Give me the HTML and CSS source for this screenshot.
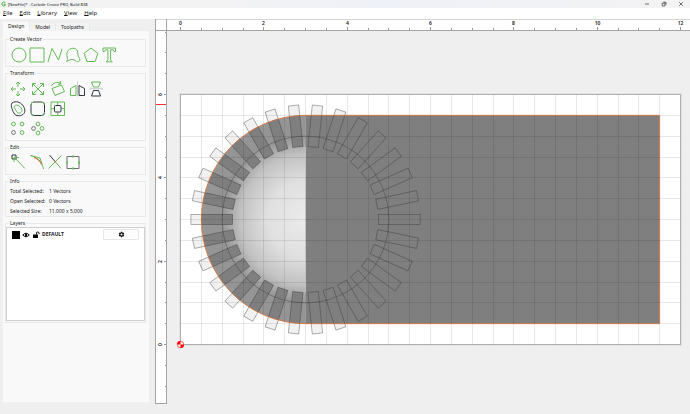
FILE: index.html
```html
<!DOCTYPE html>
<html lang="en">
<head>
<meta charset="utf-8">
<title>[NewFile]* - Carbide Create PRO, Build 838</title>
<link rel="stylesheet" href="styles.css">
</head>
<body>
<header class="titlebar">
  <svg class="app-logo" viewBox="0 0 8 8" aria-hidden="true"><path d="M5.200 2.500A2 2 0 1 0 5.200 5.500V4.300H3.800" fill="none" stroke="#3cb03c" stroke-width="1"/></svg>
  <span class="title">[NewFile]* - Carbide Create PRO, Build 838</span>
  <div class="window-buttons">
    <button aria-label="Minimize"><svg viewBox="0 0 6 6"><path d="M1 3H5"/></svg></button>
    <button aria-label="Restore"><svg viewBox="0 0 6 6"><path d="M1.2 2.2H4V5H1.2ZM2.2 1.2H5V4"/></svg></button>
    <button aria-label="Close"><svg viewBox="0 0 6 6"><path d="M1.2 1.2L4.8 4.8M4.8 1.2L1.2 4.8"/></svg></button>
  </div>
</header>
<nav class="menubar">
  <button><u>F</u>ile</button><button><u>E</u>dit</button><button><u>L</u>ibrary</button><button><u>V</u>iew</button><button><u>H</u>elp</button>
</nav>
<main class="workspace">
  <aside class="sidebar">
    <div class="tabs" role="tablist">
      <button class="tab active" role="tab" aria-selected="true">Design</button>
      <button class="tab" role="tab">Model</button>
      <button class="tab" role="tab">Toolpaths</button>
    </div>
    <div class="panel">
      <fieldset class="group create">
        <legend>Create Vector</legend>
        <div class="tools">
          <button aria-label="Circle"><svg viewBox="0 0 18 18"><circle cx="9" cy="9" r="7"/></svg></button>
          <button aria-label="Rectangle"><svg viewBox="0 0 18 18"><path d="M2 2H16V16H2Z"/></svg></button>
          <button aria-label="Polyline"><svg viewBox="0 0 18 18"><path d="M2 16L6 2.500L12.500 14L16 3"/></svg></button>
          <button aria-label="Curve"><svg viewBox="0 0 18 18"><path d="M2.500 15.500C5 13 1.500 9.500 3.500 5.500C5.500 1.500 12 1 13.500 5C14.500 8 13 9 15.500 12.500C16.500 15 15 16 12.500 15.500C9 12.500 7 13 2.500 15.500Z"/></svg></button>
          <button aria-label="Polygon"><svg viewBox="0 0 18 18"><path d="M9 2L15.800 7.200L13.200 15.500H4.800L2.200 7.200Z"/></svg></button>
          <button aria-label="Text"><svg viewBox="0 0 18 18"><path d="M3 2H15.500V5.500H14L13 3.800H10.600V14.200L12.300 15.800H6.200L7.900 14.200V3.800H5.500L4.500 5.500H3Z"/></svg></button>
        </div>
      </fieldset>
      <fieldset class="group transform">
        <legend>Transform</legend>
        <div class="tools wide">
          <button aria-label="Move"><svg viewBox="0 0 20 20"><path d="M10 3V8M10 12V17M3 10H8M12 10H17M8 5L10 3L12 5M8 15L10 17L12 15M5 8L3 10L5 12M15 8L17 10L15 12"/></svg></button>
          <button aria-label="Scale"><svg viewBox="0 0 20 20"><path d="M4.500 8V4.500H8M12 4.500H15.500V8M15.500 12V15.500H12M8 15.500H4.500V12M4.500 4.500L15.500 15.500M15.500 4.500L4.500 15.500"/></svg></button>
          <button aria-label="Rotate"><svg viewBox="0 0 20 20"><path d="M4 9.500L13.500 6L16.500 12.500L7 16.500ZM3.500 7C5 3.500 9 2.500 12.500 4.500M10 5.500L13 4.800L12 2"/></svg></button>
          <button aria-label="Mirror horizontally"><svg viewBox="0 0 20 20"><path d="M2.500 16.500V9.500L8 6.500V16.500Z"/><path class="dark" d="M11 6.500L16.500 9.500V16.500H11Z"/><path class="soft" d="M9.500 2.500V17.500"/></svg></button>
          <button aria-label="Mirror vertically"><svg viewBox="0 0 20 20"><path d="M3.500 3H12.500L10.500 8H5.500Z"/><path class="dark" d="M5.500 11.500H10.500L12.500 17H3.500Z"/><path class="soft" d="M1.500 9.700H15"/></svg></button>
        </div>
        <div class="tools wide">
          <button aria-label="Offset"><svg viewBox="0 0 20 20"><path class="dark" d="M4 4C8 1.500 12 3 14.500 6C17 9 18 13 15 15.500C12 17.500 8 17 6.500 15C5 12.500 2 7 4 4Z"/><path d="M6.500 7C9 4.500 14 8 14 11.500C13.500 14.500 9.500 15 8.500 12.500C8 10.500 5.500 9 6.500 7Z"/></svg></button>
          <button aria-label="Fillet"><svg viewBox="0 0 20 20"><rect class="dark" x="3" y="3" width="13.500" height="13.500" rx="3"/><path d="M3 6Q3 3 6 3M13.500 3Q16.500 3 16.500 6M16.500 13.500Q16.500 16.500 13.500 16.500M6 16.500Q3 16.500 3 13.500"/></svg></button>
          <button aria-label="Align"><svg viewBox="0 0 20 20"><path d="M3 3H16.500V16.500H3ZM9.700 3V6M9.700 13.500V16.500M3 9.700H6M13.500 9.700H16.500"/><rect class="dark" x="6.500" y="6.500" width="6.500" height="6.500" rx="1"/></svg></button>
        </div>
        <div class="tools wide">
          <button aria-label="Linear array"><svg viewBox="0 0 20 20"><circle cx="5.500" cy="5" r="1.900"/><circle cx="14" cy="5" r="1.900"/><circle class="mid" cx="5.500" cy="13.500" r="1.900"/><circle cx="14" cy="13.500" r="1.900"/></svg></button>
          <button aria-label="Circular array"><svg viewBox="0 0 20 20"><circle cx="10" cy="5" r="1.900"/><circle class="mid" cx="5.500" cy="9.500" r="1.900"/><circle cx="14" cy="9.500" r="1.900"/><circle cx="10" cy="14" r="1.900"/></svg></button>
        </div>
      </fieldset>
      <fieldset class="group">
        <legend>Edit</legend>
        <div class="tools">
          <button aria-label="Node edit"><svg viewBox="0 0 18 18"><path class="dark" d="M2 2H6V6H2Z"/><path d="M4.500 4.500L15 15.500M4 9V4.500H9"/></svg></button>
          <button aria-label="Trim curve"><svg viewBox="0 0 18 18"><path d="M2.500 2.500C9 4.500 14 8 15.500 16M2.500 2.500L12 5L14 11"/><path class="red" d="M6 4.500C10 6 12 8 13.500 11.500"/></svg></button>
          <button aria-label="Trim vectors"><svg viewBox="0 0 18 18"><path class="dark" d="M3.500 2L9 8.500"/><path d="M15.500 2.500L2.500 15.500M10 9.500L15 15.500"/><path class="red" d="M8.500 8L10 9.800"/></svg></button>
          <button aria-label="Join vectors"><svg viewBox="0 0 18 18"><path class="mid" d="M3 3.500H15V15.500H3Z"/><path class="node" d="M9 2.500V4.500M9 14.500V16.500M2 9.500H4M14 9.500H16"/></svg></button>
        </div>
      </fieldset>
      <fieldset class="group info-group">
        <legend>Info</legend>
        <dl class="info">
          <dt>Total Selected:</dt><dd>1 Vectors</dd>
          <dt>Open Selected:</dt><dd>0 Vectors</dd>
          <dt>Selected Size:</dt><dd>11.000 x 5.000</dd>
        </dl>
      </fieldset>
      <fieldset class="group layers">
        <legend>Layers</legend>
        <div class="layer-list">
          <div class="layer">
            <span class="swatch"></span>
            <button class="layer-icon" aria-label="Visibility"><svg viewBox="0 0 8 8"><path d="M.8 4Q4 .4 7.200 4Q4 7.600 .8 4Z" fill="none" stroke="#000"/><circle cx="4" cy="4" r="1.200"/></svg></button>
            <button class="layer-icon" aria-label="Lock"><svg viewBox="0 0 8 8"><path d="M1 3.500H6V7H1Z"/><path d="M4.500 3.500V2.200A1.200 1.200 0 0 1 7 2.200V3.200" fill="none" stroke="#000"/></svg></button>
            <span class="layer-name">DEFAULT</span>
            <button class="layer-settings" aria-label="Layer settings"><svg viewBox="0 0 8 8"><circle cx="4" cy="4" r="1.900" fill="none" stroke="#000" stroke-width="1.300"/><path d="M4 .8V2M4 6V7.200M1.200 2.400L2.300 3M5.700 5L6.800 5.600M1.200 5.600L2.300 5M5.700 3L6.800 2.400" stroke="#000" stroke-width="1.300"/></svg></button>
          </div>
        </div>
      </fieldset>
    </div>
  </aside>
  <section class="viewport">
    <div class="corner"></div>
    <svg class="ruler ruler-x" id="ruler-x"></svg>
    <svg class="ruler ruler-y" id="ruler-y"></svg>
    <svg class="canvas" id="canvas" role="img" aria-label="Design canvas"></svg>
  </section>
</main>
<script src="app.js"></script>
</body>
</html>
```
FILE: styles.css
```css
* { box-sizing: border-box; }
html, body { height: 100%; }
body {
  margin: 0;
  display: flex;
  flex-direction: column;
  background: #efefef;
  color: #1c1c1c;
  font: 5px/7px "Noto Sans", "Open Sans", sans-serif;
  overflow: hidden;
}
button {
  margin: 0;
  padding: 0;
  border: 0;
  background: none;
  color: inherit;
  font: inherit;
}
svg { display: block; }

.titlebar {
  display: flex;
  align-items: center;
  height: 8px;
  flex: none;
  background: linear-gradient(90deg, #f3f3f3 30%, #eff1f8 55%, #f3f3f3);
  font-size: 4px;
}
.app-logo { width: 8px; height: 8px; }
.window-buttons { display: flex; gap: 11px; margin-left: auto; padding-right: 6px; }
.window-buttons svg { width: 6px; height: 6px; fill: none; stroke: #333; stroke-width: .7; }

.menubar {
  display: flex;
  align-items: center;
  gap: 7px;
  height: 11px;
  flex: none;
  padding-left: 3px;
  background: #fff;
  font-size: 6px;
}
.menubar u { text-decoration-thickness: 1px; text-underline-offset: 0; }

.workspace { flex: 1; display: flex; min-height: 0; }
.sidebar {
  width: 155px;
  flex: none;
  display: flex;
  flex-direction: column;
  padding: 3px 6px 12px 3px;
}
.tabs { display: flex; align-items: flex-end; }
.tab {
  height: 8px;
  padding: 0 5px;
  background: #f3f3f3;
  border-right: 1px solid #e8e8e8;
}
.tab.active { height: 9px; background: #f9f9f9; }
.panel {
  flex: 1;
  display: flex;
  flex-direction: column;
  gap: 3px;
  padding: 5px 3px 0 2px;
  background: #f9f9f9;
}
.group {
  min-width: 0;
  margin: 0;
  padding: 2px 4px 3px;
  border: 1px solid #e8e8e8;
}
.group legend { margin-left: -1px; padding: 0 1px; }
.create { padding-top: 3px; padding-bottom: 2px; }
.transform { padding-bottom: 1px; }
.tools { display: flex; }
.tools button, .tools svg { width: 18px; height: 18px; }
.tools.wide { margin-left: -2px; }
.tools.wide button, .tools.wide svg { width: 20px; height: 20px; }
.tools svg { fill: none; stroke: #62bb55; stroke-width: 1; }
.tools .dark { stroke: #303842; }
.tools .mid { stroke: #707070; }
.tools .soft { stroke: #b4b4b4; stroke-width: .7; }
.tools .red { stroke: #f0563c; }
.tools .node { stroke-width: 2; }

.info-group { padding-top: 1px; padding-bottom: 0; }
.info {
  display: grid;
  grid-template-columns: 39px 1fr;
  margin: 0;
  line-height: 10px;
}
.info dd { margin: 0; }

.layers { padding: 0 0 1px; }
.layers legend { margin-left: 3px; }
.layer-list {
  height: 94px;
  padding: 1px 5px;
  background: #fff;
  border: 1px solid #d0d0d0;
}
.layer { display: flex; align-items: center; gap: 2px; }
.swatch { width: 8px; height: 8px; background: #000; }
.layer-icon svg { width: 8px; height: 8px; }
.layer-name { font-weight: 700; }
.layer-settings {
  display: grid;
  place-items: center;
  width: 36px;
  height: 11px;
  margin-left: auto;
  border: 1px solid #e6e6e6;
  border-radius: 1px;
  background: #fdfdfd;
}
.layer-settings svg { width: 7px; height: 7px; }

.viewport {
  flex: 1;
  min-width: 0;
  display: grid;
  grid-template-columns: 12px 1fr;
  grid-template-rows: 12px 1fr;
  padding-bottom: 10px;
}
.corner, .ruler {
  background: #fff;
  border: 0 solid #a4a4a4;
}
.corner { border-width: 0 1px 1px 1px; }
.ruler { width: 100%; height: 100%; overflow: hidden; }
.ruler-x { border-width: 0 0 1px; }
.ruler-y { border-width: 0 1px 1px 1px; }
.corner, .ruler-x { box-shadow: inset 0 1px #d4d4d4; }
.ruler path { stroke: #999; fill: none; }
.ruler text { font: 600 5px "Noto Sans", sans-serif; text-anchor: middle; fill: #222; }
.ruler .cursor { stroke: #f33; stroke-width: 1; }
.canvas { width: 100%; height: 100%; overflow: hidden; }

.board { fill: #fff; stroke: #b0b0b0; }
.board-shadow { fill: none; stroke: #e2e2e2; stroke-width: 3; }
.solid { fill: #7f7f7f; }
.rim { fill: #959595; }
.pad { fill: #f1f1f1; }
.tooth { fill: #7f7f7f; }
.grid { stroke: #000; stroke-opacity: .09; fill: none; }
.wire { stroke: #333; stroke-opacity: .75; stroke-width: .5; fill: none; }
.selected { stroke: #e07030; stroke-width: .8; fill: none; }
.edge { stroke: #ddd; stroke-width: .8; }
.origin { fill: #f00; }
.origin-back { fill: #fff; stroke: #f00; stroke-width: .6; }
```
FILE: app.js
```js
const UNIT = 125 / 3;
const ORIGIN = { x: 13.5, y: 313.5 };
const px = u => ORIGIN.x + u * UNIT;
const py = u => ORIGIN.y - u * UNIT;

function rulerX() {
  let ticks = '', labels = '';
  for (let i = 0; i <= 24; i++) {
    const x = Math.round(px(i / 2) - .5) + .5;
    ticks += `M${x} ${i % 4 ? 9 : 8}V12`;
    if (i % 4 === 0) labels += `<text x="${x}" y="6">${i / 2}</text>`;
  }
  document.getElementById('ruler-x').innerHTML = `<path d="${ticks}"/>${labels}`;
}

function rulerY() {
  let ticks = '', labels = '';
  for (let i = -2; i <= 15; i++) {
    const y = Math.round(py(i / 2) - .5) + .5;
    ticks += `M${i % 4 ? 9 : 8} ${y}H12`;
    if (i % 4 === 0) labels += `<text transform="translate(6 ${y}) rotate(-90)">${i / 2}</text>`;
  }
  document.getElementById('ruler-y').innerHTML =
    `<path d="${ticks}"/>${labels}<path class="cursor" d="M0 73.5H12"/>`;
}

function canvas() {
  const cx = px(3), cy = py(3), R = 2.5 * UNIT, r = 2 * UNIT;
  const top = py(5.5), bottom = py(.5), right = px(11.5);
  let grid = '', teeth = '';
  for (let i = 1; i < 24; i++) grid += `M${Math.round(px(i / 2) - .5) + .5} ${py(6)}V${py(0)}`;
  for (let i = 1; i < 12; i++) grid += `M${px(0)} ${Math.round(py(i / 2) - .5) + .5}H${px(12)}`;
  for (let a = 0; a < 360; a += 12) {
    teeth += `<rect x="${cx + 1.75 * UNIT}" y="${cy - UNIT / 8}" width="${UNIT}" height="${UNIT / 4}" transform="rotate(${a} ${cx} ${cy})"/>`;
  }
  const half = q => `M${cx} ${cy - q}A${q} ${q} 0 0 0 ${cx} ${cy + q}Z`;
  const board = `x="${px(0)}" y="${py(6)}" width="${12 * UNIT}" height="${6 * UNIT}"`;
  const ox = px(0), oy = py(0);
  document.getElementById('canvas').innerHTML = `
    <defs>
      <radialGradient id="dome" gradientUnits="userSpaceOnUse" cx="${cx}" cy="${cy}" r="${r}">
        <stop offset="0" stop-color="#eaeaea"/><stop offset=".45" stop-color="#e0e0e0"/>
        <stop offset=".78" stop-color="#c2c2c2"/><stop offset="1" stop-color="#959595"/>
      </radialGradient>
      <clipPath id="left"><path d="${half(R)}"/></clipPath>
    </defs>
    <rect class="board-shadow" ${board}/>
    <rect class="board" ${board}/>
    <g class="pad">${teeth}</g>
    <path class="solid" d="M${cx} ${top}H${right}V${bottom}H${cx}Z"/>
    <path class="rim" d="${half(R)}"/>
    <path fill="url(#dome)" d="${half(r)}"/>
    <g class="tooth" clip-path="url(#left)">${teeth}</g>
    <path class="edge" d="M${cx} ${cy - r + 11}V${cy + r - 11}"/>
    <path class="grid" d="${grid}"/>
    <g class="wire">${teeth}<circle cx="${cx}" cy="${cy}" r="${r}"/></g>
    <path class="selected" d="M${cx} ${top}H${right}V${bottom}H${cx}A${R} ${R} 0 0 1 ${cx} ${top}"/>
    <circle class="origin-back" cx="${ox}" cy="${oy}" r="3.2"/>
    <path class="origin" d="M${ox} ${oy}V${oy - 3.5}A3.5 3.5 0 0 0 ${ox - 3.5} ${oy}ZM${ox} ${oy}V${oy + 3.5}A3.5 3.5 0 0 0 ${ox + 3.5} ${oy}Z"/>`;
}

rulerX();
rulerY();
canvas();
```
